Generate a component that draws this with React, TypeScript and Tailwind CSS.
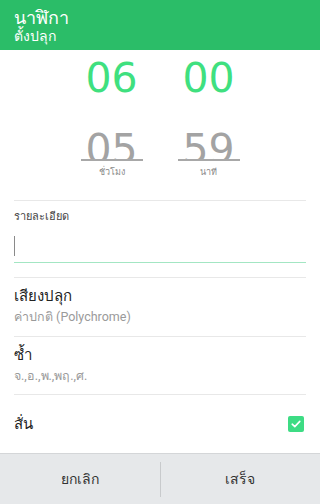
import React from "react";

const font = { fontFamily: "Roboto, 'Noto Sans', 'DejaVu Sans', sans-serif" };
const digitFont = { fontFamily: "'DejaVu Sans', sans-serif" };

function TimeCol({ top, under, label }: { top: string; under: string; label: string }) {
  return (
    <div className="w-[62px] flex flex-col items-center">
      <div className="h-[48px] leading-[48px] text-[41px] text-[#3fe07f]" style={digitFont}>{top}</div>
      <div className="mt-[23px] w-full h-[36px] overflow-hidden border-b-2 border-[#a8a8a8] flex justify-center">
        <div className="leading-[48px] text-[41px] text-[#a3a3a3]" style={digitFont}>{under}</div>
      </div>
      <div className="mt-[5px] text-[9px] leading-[12px] text-[#8a8a8a]">{label}</div>
    </div>
  );
}

export default function App() {
  return (
    <div className="w-[320px] h-[504px] bg-white flex flex-col overflow-hidden" style={font}>
      <div className="h-[50px] bg-[#2bbd68] px-[14px] pt-[9px] flex flex-col text-white">
        <div className="text-[18px] leading-[18px]">นาฬิกา</div>
        <div className="text-[14px] leading-[18px]">ตั้งปลุก</div>
      </div>
      <div className="flex-1 flex flex-col">
        <div className="h-[150px] pt-[4px] flex justify-center gap-[35px]">
          <TimeCol top="06" under="05" label="ชั่วโมง" />
          <TimeCol top="00" under="59" label="นาที" />
        </div>
        <div className="mx-[14px] border-t border-[#e8e8e8]">
          <div className="pt-[9px] text-[11px] leading-[14px] text-[#444]">รายละเอียด</div>
          <div className="mt-[6px] h-[33px] border-b border-[#a3e6c3] flex items-center">
            <div className="w-[1px] h-[20px] bg-[#8a8a8a]" />
          </div>
          <div className="h-[14px]" />
        </div>
        <div className="mx-[14px] border-t border-[#e8e8e8] h-[59px] pt-[8px]">
          <div className="text-[15px] leading-[20px] text-[#222]">เสียงปลุก</div>
          <div className="mt-[2px] text-[12.5px] leading-[18px] text-[#9a9a9a]">ค่าปกติ (Polychrome)</div>
        </div>
        <div className="mx-[14px] border-t border-[#e8e8e8] h-[58px] pt-[8px]">
          <div className="text-[15px] leading-[20px] text-[#222]">ซ้ำ</div>
          <div className="mt-[2px] text-[12.5px] leading-[18px] text-[#9a9a9a]">จ.,อ.,พ.,พฤ.,ศ.</div>
        </div>
        <div className="mx-[14px] border-t border-[#e8e8e8] flex-1 flex items-center justify-between">
          <div className="text-[15px] leading-[20px] text-[#222]">สั่น</div>
          <div className="w-[16px] h-[16px] rounded-[2px] bg-[#3ddc84] flex items-center justify-center mr-[2px]">
            <svg width="12" height="12" viewBox="0 0 12 12" fill="none">
              <path d="M2.2 6.2 L4.8 8.6 L9.8 3.4" stroke="white" strokeWidth="1.6" strokeLinecap="round" strokeLinejoin="round" />
            </svg>
          </div>
        </div>
      </div>
      <div className="h-[51px] bg-[#e6e8ea] border-t border-[#d4d6d8] flex items-center">
        <div className="flex-1 text-center text-[14px] text-[#333]">ยกเลิก</div>
        <div className="w-[1px] h-[35px] bg-[#c8cacc]" />
        <div className="flex-1 text-center text-[14px] text-[#333]">เสร็จ</div>
      </div>
    </div>
  );
}
